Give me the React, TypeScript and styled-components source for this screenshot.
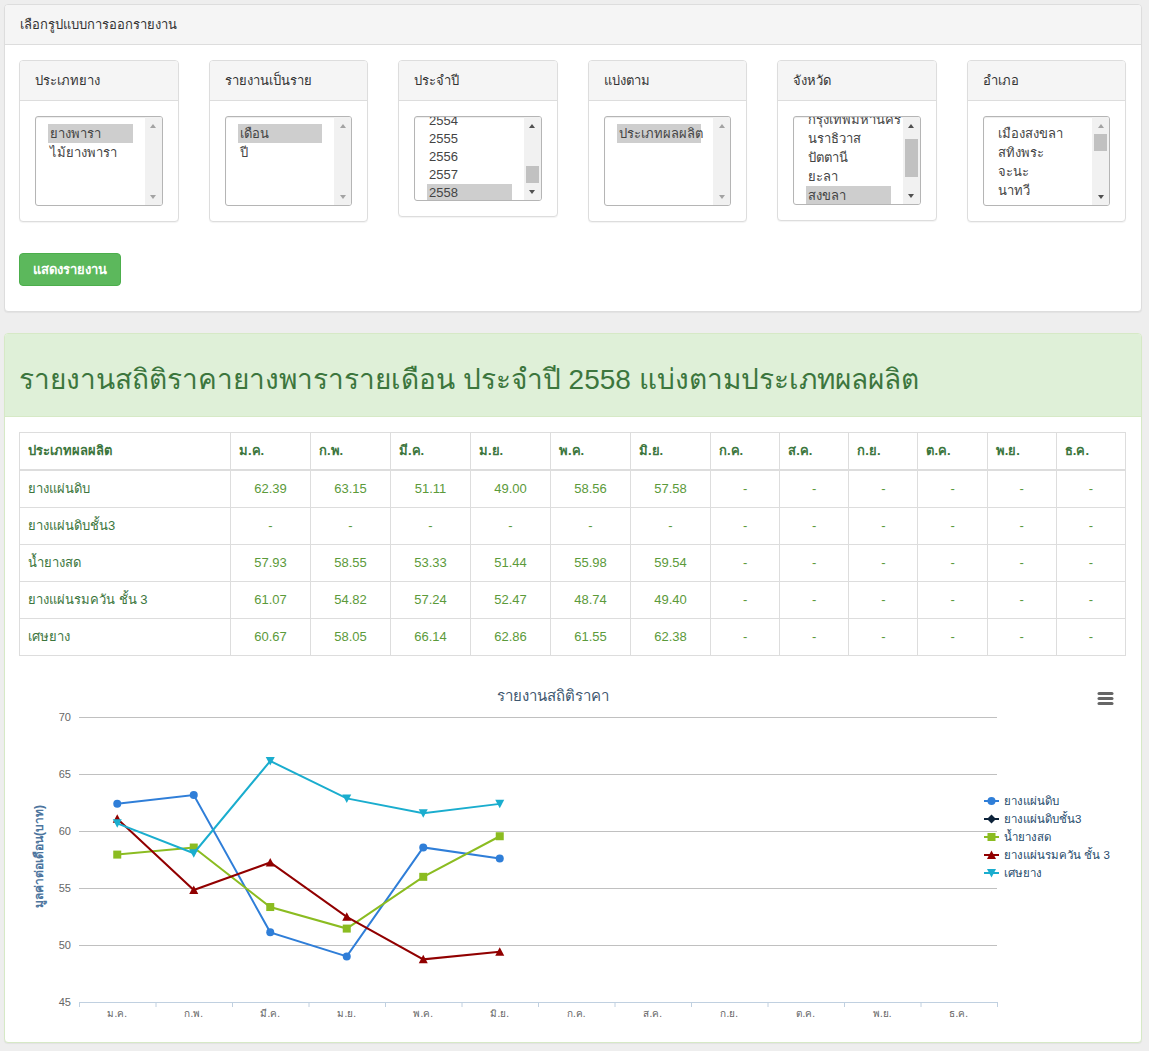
import React from "react";
import styled, { createGlobalStyle } from "styled-components";

const GlobalStyle = createGlobalStyle`
    html, body {
        margin: 0;
        padding: 0;
        background: #eeeeee;
        font-family: "Liberation Sans", Arial, "Noto Sans", sans-serif;
        font-size: 13px;
        color: #333;
    }
`;

type Filter = {
    title: string;
    height: number;
    row: number;
    items: string[];
    selected: number;
    scroll?: number;
    thumb?: { top: number; size: number };
    upDark?: boolean;
    downDark?: boolean;
};

const filters: Filter[] = [
    { title: "ประเภทยาง", height: 90, row: 19, items: ["ยางพารา", "ไม้ยางพารา"], selected: 0 },
    { title: "รายงานเป็นราย", height: 90, row: 19, items: ["เดือน", "ปี"], selected: 0 },
    {
        title: "ประจำปี",
        height: 85,
        row: 18,
        items: ["2550", "2551", "2552", "2553", "2554", "2555", "2556", "2557", "2558"],
        selected: 8,
        scroll: 84,
        thumb: { top: 32, size: 17 },
        upDark: true,
        downDark: true,
    },
    { title: "แบ่งตาม", height: 90, row: 19, items: ["ประเภทผลผลิต"], selected: 0 },
    {
        title: "จังหวัด",
        height: 89,
        row: 19,
        items: ["กระบี่", "กรุงเทพมหานคร", "นราธิวาส", "ปัตตานี", "ยะลา", "สงขลา", "สตูล"],
        selected: 5,
        scroll: 33.5,
        thumb: { top: 5, size: 38 },
        upDark: true,
        downDark: true,
    },
    {
        title: "อำเภอ",
        height: 90,
        row: 19,
        items: [
            "เมืองสงขลา", "สทิงพระ", "จะนะ", "นาทวี", "เทพา", "สะบ้าย้อย", "ระโนด",
            "กระแสสินธุ์", "รัตภูมิ", "สะเดา", "หาดใหญ่", "นาหม่อม", "ควนเนียง",
        ],
        selected: -1,
        thumb: { top: 0, size: 17 },
        downDark: true,
    },
];

const months = ["ม.ค.", "ก.พ.", "มี.ค.", "ม.ย.", "พ.ค.", "มิ.ย.", "ก.ค.", "ส.ค.", "ก.ย.", "ต.ค.", "พ.ย.", "ธ.ค."];

type Series = {
    name: string;
    color: string;
    marker: "circle" | "diamond" | "square" | "triangle" | "triangle-down";
    data: (number | null)[];
};

const series: Series[] = [
    { name: "ยางแผ่นดิบ", color: "#2f7ed8", marker: "circle", data: [62.39, 63.15, 51.11, 49.0, 58.56, 57.58] },
    { name: "ยางแผ่นดิบชั้น3", color: "#0d233a", marker: "diamond", data: [null, null, null, null, null, null] },
    { name: "น้ำยางสด", color: "#8bbc21", marker: "square", data: [57.93, 58.55, 53.33, 51.44, 55.98, 59.54] },
    { name: "ยางแผ่นรมควัน ชั้น 3", color: "#910000", marker: "triangle", data: [61.07, 54.82, 57.24, 52.47, 48.74, 49.4] },
    { name: "เศษยาง", color: "#1aadce", marker: "triangle-down", data: [60.67, 58.05, 66.14, 62.86, 61.55, 62.38] },
];

const Page = styled.div`
    padding: 4px 7px 0 4px;
`;

const Panel = styled.div<{ $tone?: "default" | "success" }>`
    background: #fff;
    border: 1px solid ${(p) => (p.$tone === "success" ? "#d6e9c6" : "#dddddd")};
    border-radius: 4px;
    box-shadow: 0 1px 1px rgba(0, 0, 0, 0.05);
    margin-bottom: 21px;
    overflow: hidden;
`;

const PanelHeading = styled.div`
    background: #f5f5f5;
    border-bottom: 1px solid #dddddd;
    padding: 10px 15px;
    line-height: 19px;
    color: #333;
`;

const SuccessHeading = styled.div`
    background: #dff0d8;
    border-bottom: 1px solid #d6e9c6;
    padding: 28px 14px 18px;
`;

const ReportTitle = styled.h3`
    margin: 0;
    font-size: 28px;
    line-height: 36px;
    font-weight: normal;
    color: #3c763d;
    white-space: nowrap;
`;

const PanelBody = styled.div`
    padding: 15px 15px 15px 14px;
`;

const FilterRow = styled.div`
    display: grid;
    grid-template-columns: repeat(6, minmax(0, 1fr));
    column-gap: 30px;
    align-items: start;
    margin-bottom: 31px;
`;

const FilterCard = styled.div`
    border: 1px solid #dddddd;
    border-radius: 4px;
    background: #fff;
    box-shadow: 0 1px 1px rgba(0, 0, 0, 0.05);
`;

const FilterHead = styled.div`
    background: #f5f5f5;
    border-bottom: 1px solid #dddddd;
    border-radius: 3px 3px 0 0;
    padding: 10px 15px;
    line-height: 19px;
`;

const FilterBody = styled.div`
    padding: 15px;
`;

const ListBox = styled.div<{ $h: number }>`
    display: flex;
    height: ${(p) => p.$h}px;
    border: 1px solid #b5b5b5;
    border-radius: 3px;
    box-sizing: border-box;
    overflow: hidden;
    background: #fff;
    box-shadow: inset 0 1px 1px rgba(0, 0, 0, 0.075);
`;

const ListArea = styled.div`
    flex: 1;
    min-width: 0;
    overflow: hidden;
`;

const ListItems = styled.div<{ $scroll: number }>`
    padding: 7px 12px 6px;
    margin-top: ${(p) => -p.$scroll}px;
`;

const ListOption = styled.div<{ $selected: boolean; $row: number }>`
    height: ${(p) => p.$row}px;
    line-height: ${(p) => p.$row}px;
    padding-left: 2px;
    white-space: nowrap;
    color: #444;
    background: ${(p) => (p.$selected ? "#cecece" : "transparent")};
`;

const ScrollBar = styled.div`
    width: 17px;
    flex: none;
    display: flex;
    flex-direction: column;
    background: #f1f1f1;
`;

const ScrollArrow = styled.div<{ $dir: "up" | "down"; $dark?: boolean }>`
    height: 17px;
    display: flex;
    align-items: center;
    justify-content: center;
    &::after {
        content: "";
        width: 0;
        height: 0;
        border-left: 3.5px solid transparent;
        border-right: 3.5px solid transparent;
        ${(p) => (p.$dir === "up" ? "border-bottom" : "border-top")}: 4px solid
            ${(p) => (p.$dark ? "#505050" : "#a3a3a3")};
    }
`;

const ScrollTrack = styled.div`
    flex: 1;
    padding: 0 2px;
`;

const ScrollThumb = styled.div<{ $top: number; $size: number }>`
    margin-top: ${(p) => p.$top}px;
    height: ${(p) => p.$size}px;
    background: #c1c1c1;
`;

const ShowButton = styled.button`
    display: inline-block;
    margin-bottom: 10px;
    padding: 6px 13px;
    line-height: 19px;
    font-family: inherit;
    font-size: 13px;
    font-weight: bold;
    color: #fff;
    background: #5cb85c;
    border: 1px solid #4cae4c;
    border-radius: 4px;
    cursor: pointer;
`;

const PriceTable = styled.table`
    width: 100%;
    table-layout: fixed;
    border-collapse: collapse;
    border: 1px solid #dddddd;
`;

const HeadCell = styled.th`
    padding: 8px;
    line-height: 20px;
    text-align: left;
    font-weight: bold;
    color: #3c763d;
    border: 1px solid #dddddd;
    border-bottom-width: 2px;
`;

const LabelCell = styled.td`
    padding: 8px;
    line-height: 20px;
    color: #3c763d;
    border: 1px solid #dddddd;
    white-space: nowrap;
`;

const ValueCell = styled.td`
    padding: 8px;
    line-height: 20px;
    text-align: center;
    color: #5b9a3a;
    border: 1px solid #dddddd;
`;

const ChartBox = styled.div`
    margin-top: 20px;
    height: 351px;
`;

const Scroll = ({ f }: { f: Filter }) => (
    <ScrollBar>
        <ScrollArrow $dir="up" $dark={f.upDark} />
        <ScrollTrack>{f.thumb && <ScrollThumb $top={f.thumb.top} $size={f.thumb.size} />}</ScrollTrack>
        <ScrollArrow $dir="down" $dark={f.downDark} />
    </ScrollBar>
);

const FilterPanel = ({ f }: { f: Filter }) => (
    <FilterCard>
        <FilterHead>{f.title}</FilterHead>
        <FilterBody>
            <ListBox $h={f.height}>
                <ListArea>
                    <ListItems $scroll={f.scroll ?? 0}>
                        {f.items.map((it, i) => (
                            <ListOption key={it} $row={f.row} $selected={i === f.selected}>
                                {it}
                            </ListOption>
                        ))}
                    </ListItems>
                </ListArea>
                <Scroll f={f} />
            </ListBox>
        </FilterBody>
    </FilterCard>
);

// chart geometry (svg coords)
const W = 1108;
const H = 351;
const PL = 60;
const PR = 978;
const PT = 41;
const PB = 326;
const step = (PR - PL) / 12;
const yOf = (v: number) => PT + ((70 - v) * (PB - PT)) / 25;
const xOf = (i: number) => PL + step * (i + 0.5);

const Marker = ({ type, x, y, color }: { type: Series["marker"]; x: number; y: number; color: string }) => {
    switch (type) {
        case "circle":
            return <circle cx={x} cy={y} r={4} fill={color} />;
        case "diamond":
            return <path d={`M${x} ${y - 4.5}L${x + 4.5} ${y}L${x} ${y + 4.5}L${x - 4.5} ${y}Z`} fill={color} />;
        case "square":
            return <rect x={x - 4} y={y - 4} width={8} height={8} fill={color} />;
        case "triangle":
            return <path d={`M${x} ${y - 4.5}L${x + 4.5} ${y + 4}L${x - 4.5} ${y + 4}Z`} fill={color} />;
        default:
            return <path d={`M${x} ${y + 4.5}L${x + 4.5} ${y - 4}L${x - 4.5} ${y - 4}Z`} fill={color} />;
    }
};

const PriceChart = () => (
    <svg width={W} height={H} viewBox={`0 0 ${W} ${H}`} style={{ display: "block" }}>
        <text x={534} y={25} textAnchor="middle" fontSize={15} fill="#3e576f" fontFamily="Liberation Sans, sans-serif">
            รายงานสถิติราคา
        </text>
        <g stroke="#666" strokeWidth={3} strokeLinecap="round">
            <line x1={1080} y1={17.5} x2={1093} y2={17.5} />
            <line x1={1080} y1={22.5} x2={1093} y2={22.5} />
            <line x1={1080} y1={27.5} x2={1093} y2={27.5} />
        </g>
        {[70, 65, 60, 55, 50].map((v) => (
            <line key={v} x1={PL} x2={PR} y1={yOf(v) + 0.5} y2={yOf(v) + 0.5} stroke="#c0c0c0" />
        ))}
        {[70, 65, 60, 55, 50, 45].map((v) => (
            <text key={v} x={52} y={yOf(v) + 4} textAnchor="end" fontSize={11} fill="#666" fontFamily="Liberation Sans, sans-serif">
                {v}
            </text>
        ))}
        <text
            transform={`translate(24 ${(PT + PB) / 2 - 3}) rotate(-90)`}
            textAnchor="middle"
            fontSize={12}
            fontWeight="bold"
            fill="#4d759e"
            fontFamily="Liberation Sans, sans-serif"
        >
            มูลค่าต่อเดือน(บาท)
        </text>
        <line x1={PL} x2={PR} y1={PB + 0.5} y2={PB + 0.5} stroke="#c0d0e0" />
        {Array.from({ length: 13 }).map((_, i) => (
            <line key={i} x1={PL + step * i + 0.5} x2={PL + step * i + 0.5} y1={PB} y2={PB + 5} stroke="#c0d0e0" />
        ))}
        {months.map((m, i) => (
            <text key={m} x={xOf(i)} y={PB + 15} textAnchor="middle" fontSize={10} fill="#666" fontFamily="Liberation Sans, sans-serif">
                {m}
            </text>
        ))}
        {series.map((s) => {
            const pts = s.data
                .map((v, i) => (v == null ? null : [xOf(i), yOf(v)]))
                .filter((p): p is number[] => p !== null);
            return (
                <g key={s.name}>
                    {pts.length > 1 && (
                        <polyline points={pts.map((p) => p.join(",")).join(" ")} fill="none" stroke={s.color} strokeWidth={2} />
                    )}
                    {pts.map((p, i) => (
                        <Marker key={i} type={s.marker} x={p[0]} y={p[1]} color={s.color} />
                    ))}
                </g>
            );
        })}
        {series.map((s, i) => {
            const y = 125 + i * 18;
            return (
                <g key={s.name}>
                    <line x1={965} x2={980} y1={y} y2={y} stroke={s.color} strokeWidth={2} />
                    <Marker type={s.marker} x={972.5} y={y} color={s.color} />
                    <text x={985} y={y + 4} fontSize={11.5} fill="#274b6d" fontFamily="Liberation Sans, sans-serif">
                        {s.name}
                    </text>
                </g>
            );
        })}
    </svg>
);

const fmt = (v: number | null) => (v == null ? "-" : v.toFixed(2));

export default function App() {
    return (
        <>
            <GlobalStyle />
            <Page>
                <Panel>
                    <PanelHeading>เลือกรูปแบบการออกรายงาน</PanelHeading>
                    <PanelBody>
                        <FilterRow>
                            {filters.map((f) => (
                                <FilterPanel key={f.title} f={f} />
                            ))}
                        </FilterRow>
                        <ShowButton>แสดงรายงาน</ShowButton>
                    </PanelBody>
                </Panel>
                <Panel $tone="success">
                    <SuccessHeading>
                        <ReportTitle>รายงานสถิติราคายางพารารายเดือน ประจำปี 2558 แบ่งตามประเภทผลผลิต</ReportTitle>
                    </SuccessHeading>
                    <PanelBody>
                        <PriceTable>
                            <colgroup>
                                <col style={{ width: 211 }} />
                                {months.map((m, i) => (
                                    <col key={m} style={i < 6 ? { width: 80 } : undefined} />
                                ))}
                            </colgroup>
                            <thead>
                                <tr>
                                    <HeadCell>ประเภทผลผลิต</HeadCell>
                                    {months.map((m) => (
                                        <HeadCell key={m}>{m}</HeadCell>
                                    ))}
                                </tr>
                            </thead>
                            <tbody>
                                {series.map((s) => (
                                    <tr key={s.name}>
                                        <LabelCell>{s.name}</LabelCell>
                                        {months.map((m, i) => (
                                            <ValueCell key={m}>{fmt(s.data[i] ?? null)}</ValueCell>
                                        ))}
                                    </tr>
                                ))}
                            </tbody>
                        </PriceTable>
                        <ChartBox>
                            <PriceChart />
                        </ChartBox>
                    </PanelBody>
                </Panel>
            </Page>
        </>
    );
}
